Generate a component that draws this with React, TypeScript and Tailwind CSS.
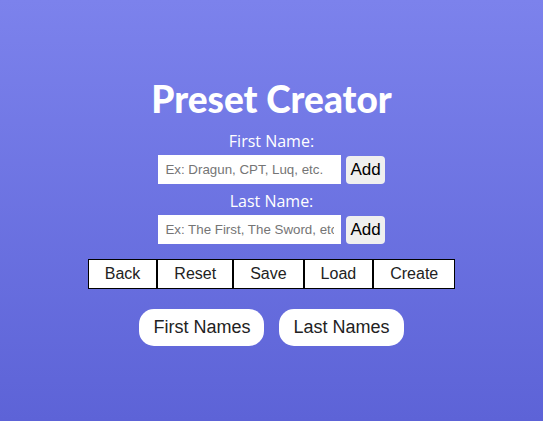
export default function App() {
  const actions = ['Back', 'Reset', 'Save', 'Load', 'Create'];

  return (
    <div className="flex h-[421px] w-full flex-col items-center bg-gradient-to-b from-[#7c82ec] to-[#5d63d7] pt-[75px] font-['Liberation_Sans',Arial,sans-serif]">
      <h1 className="text-[37px] font-black leading-[48px] text-white font-['Lato',sans-serif]">
        Preset Creator
      </h1>

      <label className="mt-[8px] text-[16px] leading-[20px] text-white font-['Open_Sans',sans-serif]">
        First Name:
      </label>
      <div className="mt-[4px] flex items-center gap-[5px]">
        <input
          className="h-[29px] w-[183px] bg-white px-[7px] text-[13.33px] text-black outline-none placeholder:text-[#757575]"
          placeholder="Ex: Dragun, CPT, Luq, etc."
        />
        <button className="h-[28px] rounded-[4px] bg-[#efefef] px-[4px] text-[17px] leading-[20px] text-black">
          Add
        </button>
      </div>

      <label className="mt-[7px] text-[16px] leading-[20px] text-white font-['Open_Sans',sans-serif]">
        Last Name:
      </label>
      <div className="mt-[4px] flex items-center gap-[5px]">
        <input
          className="h-[29px] w-[183px] bg-white px-[7px] text-[13.33px] text-black outline-none placeholder:text-[#757575]"
          placeholder="Ex: The First, The Sword, etc."
        />
        <button className="h-[28px] rounded-[4px] bg-[#efefef] px-[4px] text-[17px] leading-[20px] text-black">
          Add
        </button>
      </div>

      <div className="mt-[15px] flex">
        {actions.map((a) => (
          <button
            key={a}
            className="h-[30px] border border-black bg-white px-[16px] text-[16px] leading-[18px] text-[#222]"
          >
            {a}
          </button>
        ))}
      </div>

      <div className="mt-[20px] flex gap-[15px]">
        <button className="h-[37px] rounded-[15px] bg-white px-[14px] text-[18px] text-[#222]">
          First Names
        </button>
        <button className="h-[37px] rounded-[15px] bg-white px-[14px] text-[18px] text-[#222]">
          Last Names
        </button>
      </div>
    </div>
  );
}
